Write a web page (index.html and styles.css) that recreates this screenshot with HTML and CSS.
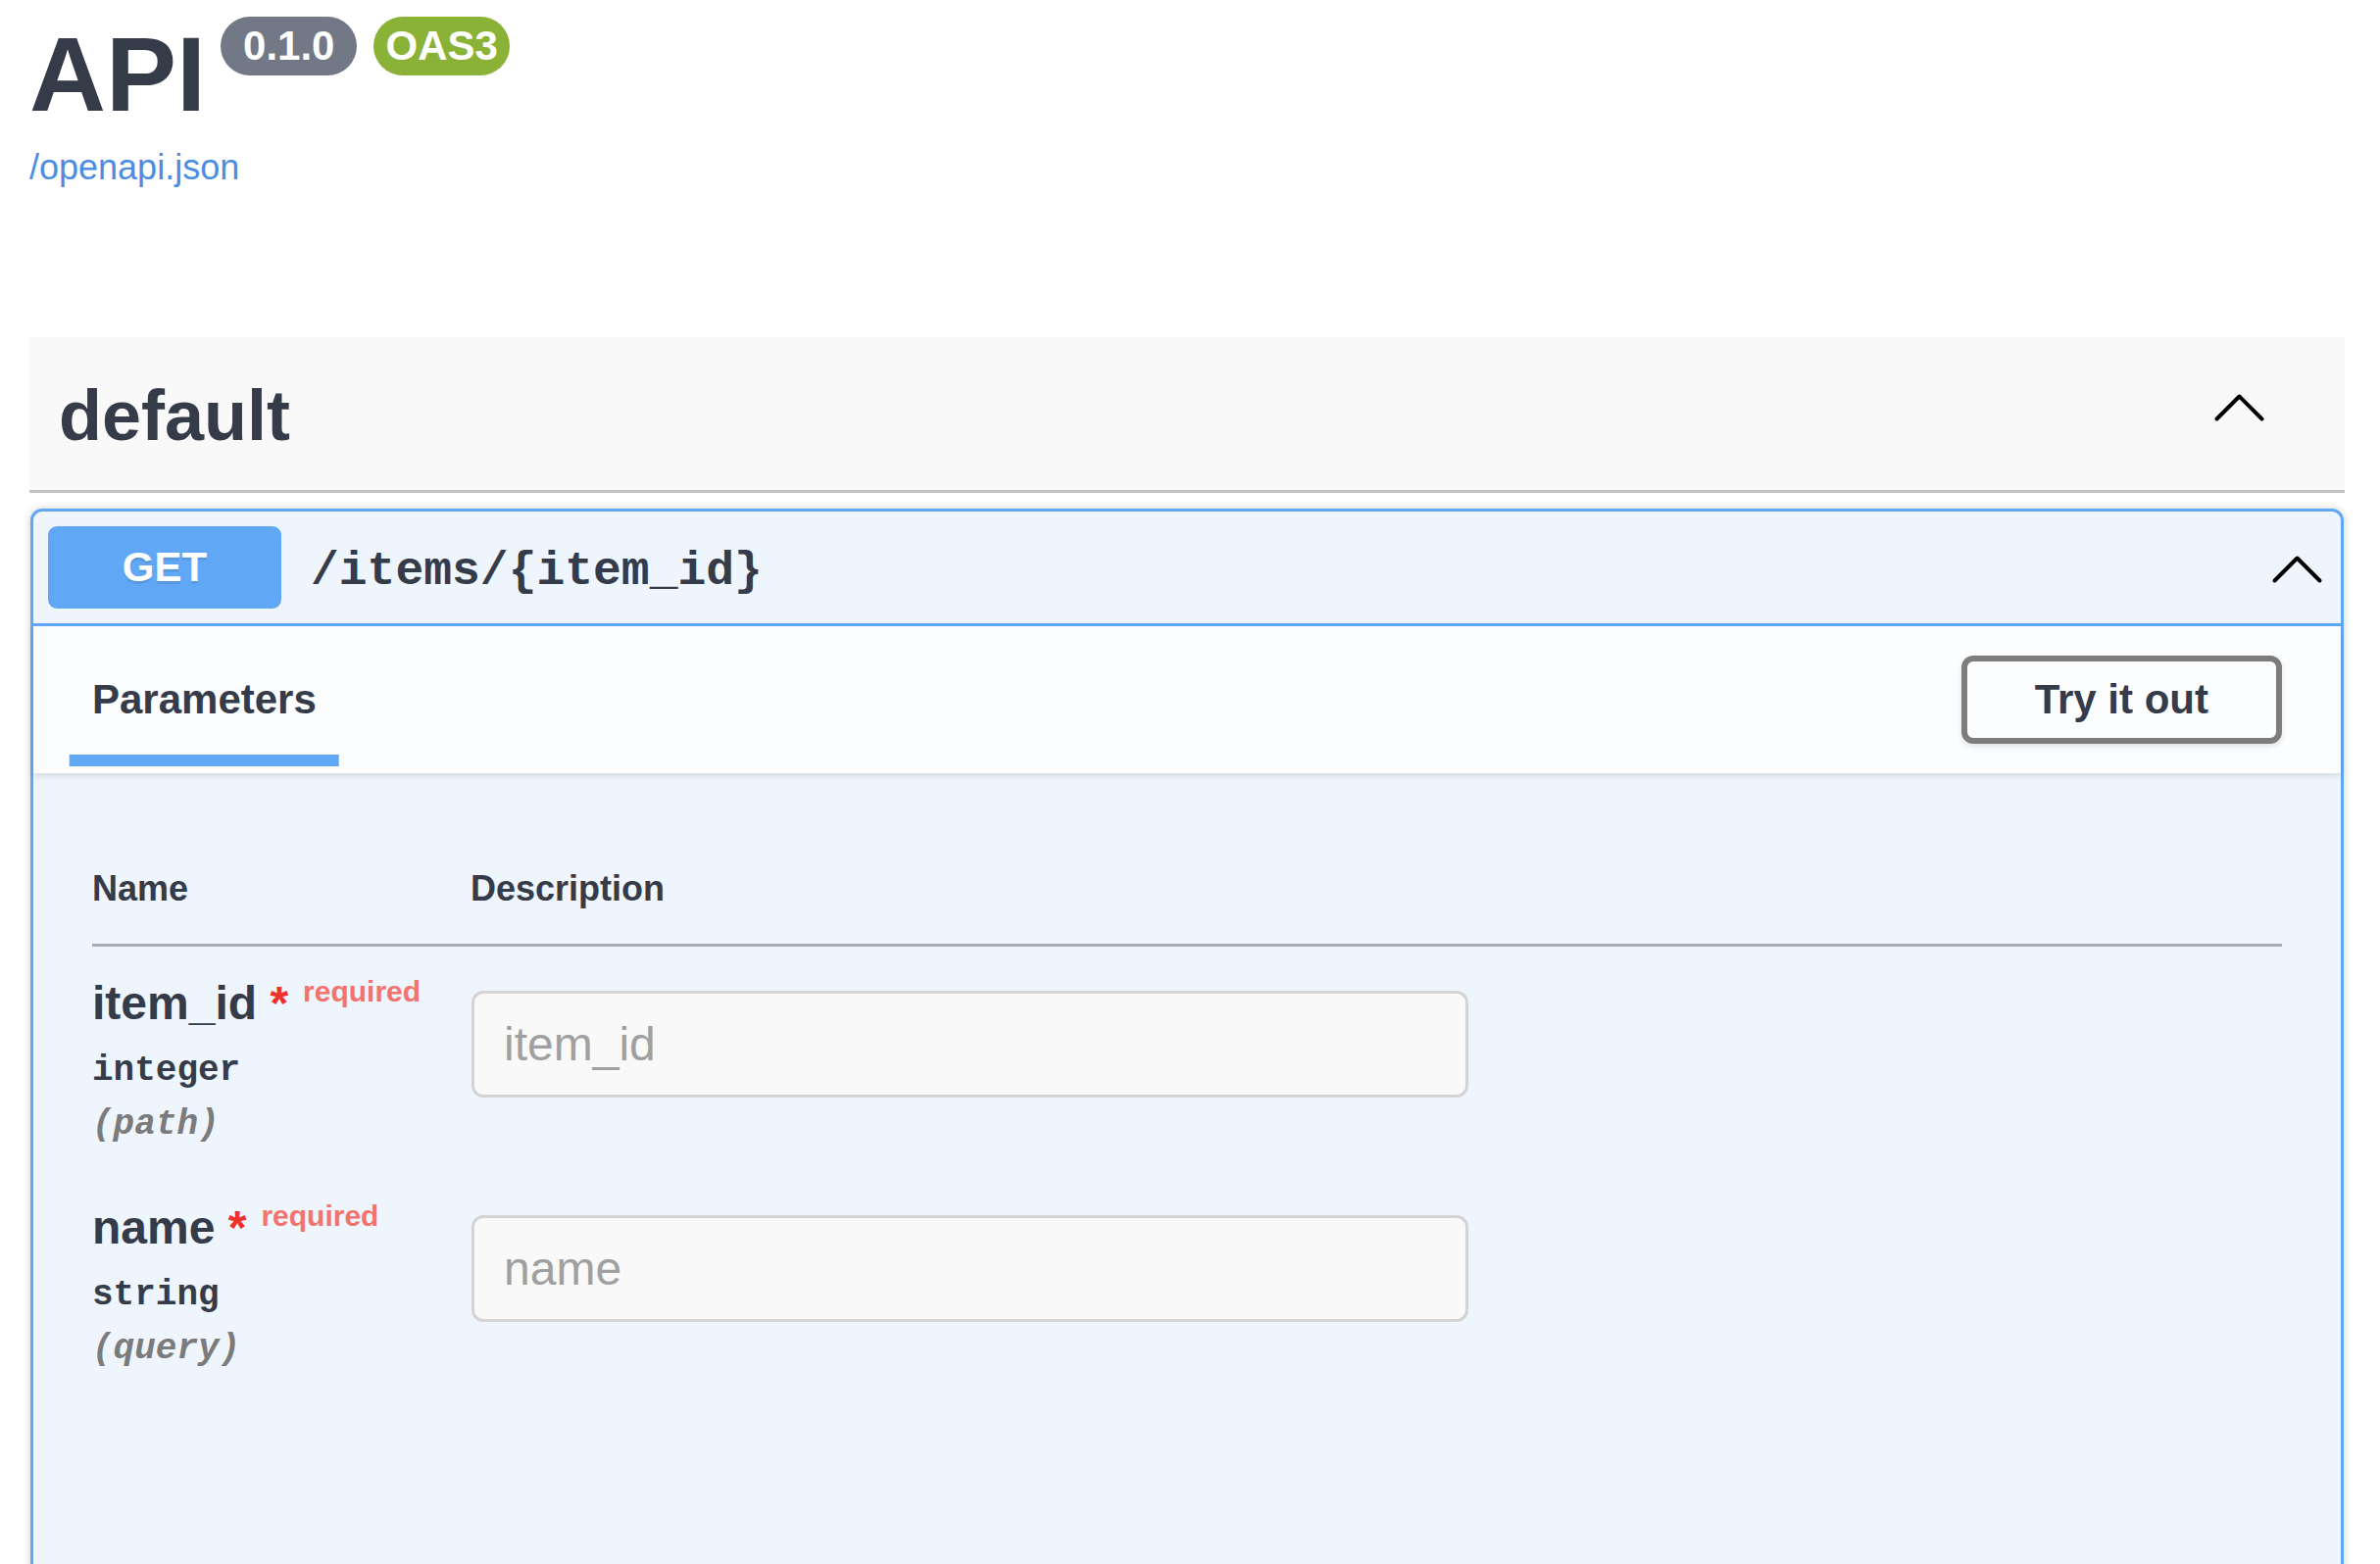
FILE: index.html
```html
<!DOCTYPE html>
<html lang="en">
<head>
<meta charset="utf-8">
<title>API - Swagger UI</title>
<link rel="stylesheet" href="styles.css">
</head>
<body>
<div class="wrapper">
  <section class="info">
    <h2 class="title"><span class="title-text">API</span><small class="badge badge-version">0.1.0</small><small class="badge badge-oas">OAS3</small></h2>
    <a class="spec-link" href="#">/openapi.json</a>
  </section>

  <section class="tag-section">
    <h3 class="tag">
      <span class="tag-name">default</span>
      <svg class="chevron chevron-tag" width="60" height="60" viewBox="0 0 60 60" aria-hidden="true"><polyline points="7.5,41.5 30.5,18.5 53.5,41.5" fill="none" stroke="#000" stroke-width="4" stroke-linecap="round" stroke-linejoin="round"/></svg>
    </h3>

    <div class="opblock">
      <div class="summary">
        <span class="method">GET</span>
        <span class="path">/items/{item_id}</span>
        <svg class="chevron chevron-op" width="60" height="60" viewBox="0 0 60 60" aria-hidden="true"><polyline points="7.5,41.5 30.5,18.5 53.5,41.5" fill="none" stroke="#000" stroke-width="4" stroke-linecap="round" stroke-linejoin="round"/></svg>
      </div>
      <div class="opblock-body">
        <div class="section-header">
          <div class="tab-header">
            <h4 class="tab-item"><span class="tab-label">Parameters</span></h4>
          </div>
          <button class="btn-try" type="button">Try it out</button>
        </div>
        <div class="table-container">
          <table class="params">
            <thead>
              <tr><th class="col-name">Name</th><th class="col-desc">Description</th></tr>
            </thead>
            <tbody>
              <tr>
                <td class="col-name">
                  <div class="param-name">item_id<span class="star">&nbsp;*</span><span class="req">required</span></div>
                  <div class="param-type">integer</div>
                  <div class="param-in">(path)</div>
                </td>
                <td class="col-desc"><input class="param-input" type="text" placeholder="item_id"></td>
              </tr>
              <tr>
                <td class="col-name">
                  <div class="param-name">name<span class="star">&nbsp;*</span><span class="req">required</span></div>
                  <div class="param-type">string</div>
                  <div class="param-in">(query)</div>
                </td>
                <td class="col-desc"><input class="param-input" type="text" placeholder="name"></td>
              </tr>
            </tbody>
          </table>
        </div>
      </div>
    </div>
  </section>
</div>
</body>
</html>
```

FILE: styles.css
```css
html {
  overflow: hidden;
}

body {
  margin: 0;
  background: #ffffff;
  color: #353b48;
  font-family: "Liberation Sans", Arial, Helvetica, sans-serif;
}

.wrapper {
  padding: 0 36px 0 30px;
}

/* ---------- info ---------- */
.info {
  padding-top: 14px;
}

.title {
  display: flex;
  align-items: flex-start;
  margin: 0;
  font-size: 108px;
  font-weight: 700;
  line-height: 124px;
  color: #353b48;
}

.badge {
  margin-top: 3px;
  margin-left: 15px;
  height: 60px;
  border-radius: 171px;
  font-size: 42px;
  line-height: 60px;
  font-weight: 700;
  color: #ffffff;
}

.badge-version {
  padding: 0 23px;
  background: #727885;
}

.badge-oas {
  margin-left: 17px;
  padding: 0 12px;
  background: #89b236;
}

.spec-link {
  display: block;
  margin-top: 12px;
  font-size: 36px;
  line-height: 41px;
  color: #4a8de1;
  text-decoration: none;
}

/* ---------- tag section ---------- */
.tag-section {
  margin-top: 153px;
}

.tag {
  display: flex;
  align-items: center;
  justify-content: space-between;
  height: 156px;
  margin: 0 0 16px;
  padding: 0 78px 0 30px;
  background: #f9f9f9;
  border-bottom: 3px solid #c0c1c4;
  font-size: 72px;
  font-weight: 700;
  color: #353b48;
}

.tag-name {
  line-height: 83px;
  margin-top: 4px;
}

.chevron {
  flex: none;
  display: block;
}

.chevron-tag {
  margin-top: -12px;
}

/* ---------- operation block ---------- */
.opblock {
  margin: 0 1px;
  background: #eef5fd;
  border: 3px solid #60a8f6;
  border-radius: 12px;
  box-shadow: 0 0 9px rgba(0, 0, 0, 0.19);
}

.summary {
  display: flex;
  align-items: center;
  padding: 15px;
  border-bottom: 3px solid #60a8f6;
}

.method {
  flex: none;
  width: 238px;
  padding: 18px 0;
  background: #60a8f6;
  border-radius: 9px;
  color: #ffffff;
  font-size: 42px;
  line-height: 48px;
  font-weight: 700;
  text-align: center;
  text-shadow: 0 3px 0 rgba(0, 0, 0, 0.1);
}

.path {
  flex: 1;
  padding: 8px 30px 0;
  font-family: "Liberation Mono", "Courier New", monospace;
  font-size: 48px;
  line-height: 54px;
  font-weight: 700;
  color: #353b48;
}

.chevron-op {
  margin-top: 4px;
}

/* ---------- section header ---------- */
.section-header {
  display: flex;
  align-items: center;
  min-height: 150px;
  box-sizing: border-box;
  padding: 24px 60px;
  background: rgba(255, 255, 255, 0.8);
  box-shadow: 0 3px 6px rgba(0, 0, 0, 0.1);
}

.tab-header {
  flex: 1;
  display: flex;
}

.tab-item {
  margin: 0;
  font-size: 42px;
  line-height: 48px;
  font-weight: 700;
  color: #353b48;
}

.tab-label {
  position: relative;
}

.tab-label::after {
  content: "";
  position: absolute;
  left: 50%;
  bottom: -45px;
  width: 120%;
  height: 12px;
  background: #60a8f6;
  transform: translateX(-50%);
}

.btn-try {
  padding: 15px 69px;
  background: transparent;
  border: 6px solid #7d7d7d;
  border-radius: 12px;
  box-shadow: 0 3px 6px rgba(0, 0, 0, 0.1);
  font-family: "Liberation Sans", Arial, sans-serif;
  font-size: 42px;
  line-height: 48px;
  font-weight: 700;
  color: #353b48;
}

/* ---------- parameters table ---------- */
.table-container {
  padding: 61px 60px 400px;
}

.params {
  width: 100%;
  border-collapse: collapse;
}

.params th {
  padding: 36px 0;
  border-bottom: 3px solid #a7acb6;
  font-size: 36px;
  line-height: 41px;
  font-weight: 700;
  text-align: left;
  color: #353b48;
}

.params th.col-name,
.params td.col-name {
  width: 386px;
}

.params td {
  padding: 30px 0 0;
  vertical-align: top;
}

.param-name {
  font-size: 48px;
  line-height: 55px;
  font-weight: 700;
  color: #353b48;
}

.star {
  color: #f0302a;
}

.req {
  position: relative;
  top: -18px;
  padding: 0 15px;
  font-size: 30px;
  line-height: 1;
  font-weight: 700;
  color: #f2736f;
}

.param-type {
  padding-top: 15px;
  font-family: "Liberation Mono", "Courier New", monospace;
  font-size: 36px;
  line-height: 54px;
  font-weight: 700;
  color: #353b48;
}

.param-in {
  padding-bottom: 19px;
  font-family: "Liberation Mono", "Courier New", monospace;
  font-size: 36px;
  line-height: 56px;
  font-weight: 700;
  font-style: italic;
  color: #7b7b7b;
}

.param-input {
  display: block;
  box-sizing: border-box;
  width: 1017px;
  margin: 15px 0 15px 1px;
  padding: 24px 30px;
  background: #f9f9f9;
  border: 3px solid #d4d4d4;
  border-radius: 12px;
  font-family: "Liberation Sans", Arial, sans-serif;
  font-size: 48px;
  line-height: 55px;
  color: #353b48;
  outline: none;
}

.param-input::placeholder {
  color: #a0a0a0;
}
```
